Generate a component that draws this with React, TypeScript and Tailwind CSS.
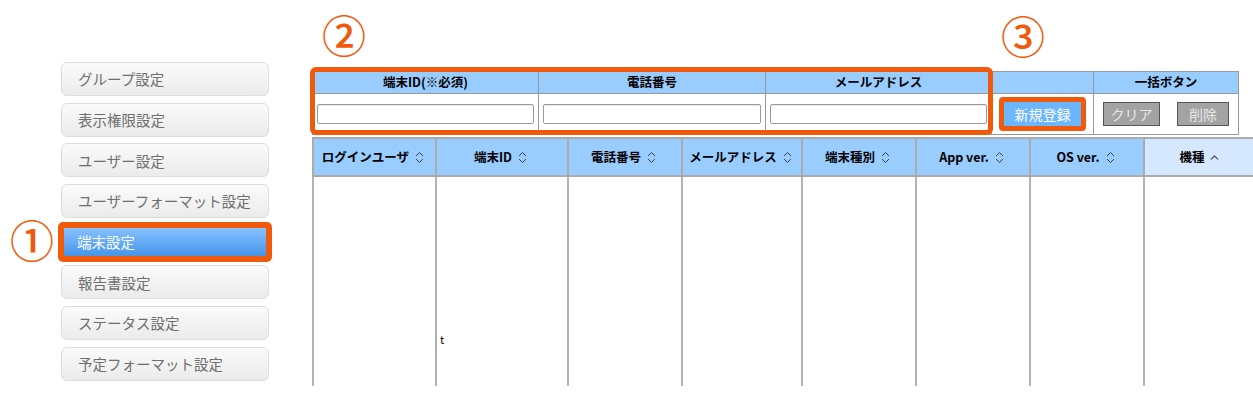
import React from "react";
import { ChevronsUpDown, ChevronUp } from "lucide-react";

const FONT = { fontFamily: '"Noto Sans CJK JP", "Noto Sans", sans-serif' };

const menu = [
  "グループ設定",
  "表示権限設定",
  "ユーザー設定",
  "ユーザーフォーマット設定",
  "端末設定",
  "報告書設定",
  "ステータス設定",
  "予定フォーマット設定",
];

function Circled({ ch, className }: { ch: string; className: string }) {
  return (
    <div
      className={"absolute text-[#f15a0a] text-[44px] font-medium leading-none " + className}
      style={FONT}
    >
      {ch}
    </div>
  );
}

const cols = [
  { label: "ログインユーザ", w: 123 },
  { label: "端末ID", w: 132 },
  { label: "電話番号", w: 114 },
  { label: "メールアドレス", w: 120 },
  { label: "端末種別", w: 114 },
  { label: "App ver.", w: 114 },
  { label: "OS ver.", w: 114 },
  { label: "機種", w: 112 },
];

export default function App() {
  return (
    <div
      className="relative flex w-[1253px] h-[395px] overflow-hidden bg-white"
      style={FONT}
    >
      {/* Sidebar */}
      <div className="w-[312px] shrink-0 pt-[62px] pl-[61px] flex flex-col gap-[6.7px]">
        {menu.map((m) =>
          m === "端末設定" ? (
            <div key={m} className="relative w-[208px] h-[34px]">
              <div className="absolute -left-[3px] -right-[3px] -top-[3px] -bottom-[3px] rounded-[5px] border-[6px] border-[#f15a0a] bg-gradient-to-b from-[#86c1ff] to-[#4595ea] flex items-center pl-[13px] text-white text-[14.5px]">
                {m}
              </div>
            </div>
          ) : (
            <div
              key={m}
              className="w-[208px] h-[34px] rounded-[6px] border border-[#dddddd] bg-gradient-to-b from-[#fbfbfb] to-[#ebebeb] flex items-center pl-[16px] text-[#6e6e6e] text-[14.5px]"
            >
              {m}
            </div>
          )
        )}
      </div>

      {/* Main */}
      <div className="flex-1 pt-[71px] flex flex-col gap-[2px]">
        <table className="border-collapse table-fixed w-[926px] text-[12.5px]">
          <colgroup>
            <col className="w-[226px]" />
            <col className="w-[227px]" />
            <col className="w-[226px]" />
            <col className="w-[102px]" />
            <col className="w-[145px]" />
          </colgroup>
          <tbody>
            <tr className="h-[22px] bg-[#99ccff]">
              {["端末ID(※必須)", "電話番号", "メールアドレス", "", "一括ボタン"].map(
                (h, i) => (
                  <th
                    key={i}
                    className="border border-[#999999] font-bold text-black text-center p-0"
                  >
                    {h}
                  </th>
                )
              )}
            </tr>
            <tr className="h-[41px]">
              {[0, 1, 2].map((i) => (
                <td key={i} className="border border-[#999999] px-[4px]">
                  <div className="h-[20px] rounded-[2px] border border-[#9a9a9a] bg-white shadow-[inset_0_1px_1px_rgba(0,0,0,0.08)]" />
                </td>
              ))}
              <td className="border border-[#999999] pl-[7px]">
                <div className="w-[87px] h-[34px] rounded-[4px] border-[5px] border-[#f15a0a] bg-[#6cb6ff] flex items-center justify-center text-white text-[14px]">
                  新規登録
                </div>
              </td>
              <td className="border border-[#999999]">
                <div className="flex items-center justify-between px-[9px]">
                  <div className="w-[57px] h-[24px] border border-[#555555] bg-[#a3a3a3] flex items-center justify-center text-[#e8e8e8] text-[14px]">
                    クリア
                  </div>
                  <div className="w-[52px] h-[24px] border border-[#555555] bg-[#a3a3a3] flex items-center justify-center text-[#e8e8e8] text-[14px]">
                    削除
                  </div>
                </div>
              </td>
            </tr>
          </tbody>
        </table>

        <table className="border-collapse table-fixed w-[943px] text-[12.5px]">
          <colgroup>
            {cols.map((c, i) => (
              <col key={i} style={{ width: c.w }} />
            ))}
          </colgroup>
          <tbody>
            <tr className="h-[38px]">
              {cols.map((c, i) => (
                <th
                  key={i}
                  className={
                    "border-2 border-[#ababab] font-bold text-black p-0 " +
                    (i === 7 ? "bg-[#d6e8ff]" : "bg-[#99ccff]")
                  }
                >
                  <span className="inline-flex items-center gap-[3px]">
                    {c.label}
                    {i === 7 ? (
                      <ChevronUp size={13} strokeWidth={2} className="text-[#444]" />
                    ) : (
                      <ChevronsUpDown size={15} strokeWidth={1.5} className="text-[#333]" />
                    )}
                  </span>
                </th>
              ))}
            </tr>
            <tr className="h-[210px]">
              {cols.map((c, i) => (
                <td
                  key={i}
                  className="border-x-2 border-[#b3b3b3] align-top p-0"
                >
                  {i === 1 ? (
                    <div className="pt-[157px] pl-[3px] text-[11px] leading-none text-black">
                      t
                    </div>
                  ) : null}
                </td>
              ))}
            </tr>
          </tbody>
        </table>
      </div>

      {/* Annotations */}
      <div className="absolute left-[310px] top-[67px] w-[683px] h-[68px] rounded-[6px] border-[5px] border-[#f15a0a]" />
      <Circled ch="①" className="left-[10px] top-[217px]" />
      <Circled ch="②" className="left-[322px] top-[12px]" />
      <Circled ch="③" className="left-[1001px] top-[13px]" />
    </div>
  );
}
